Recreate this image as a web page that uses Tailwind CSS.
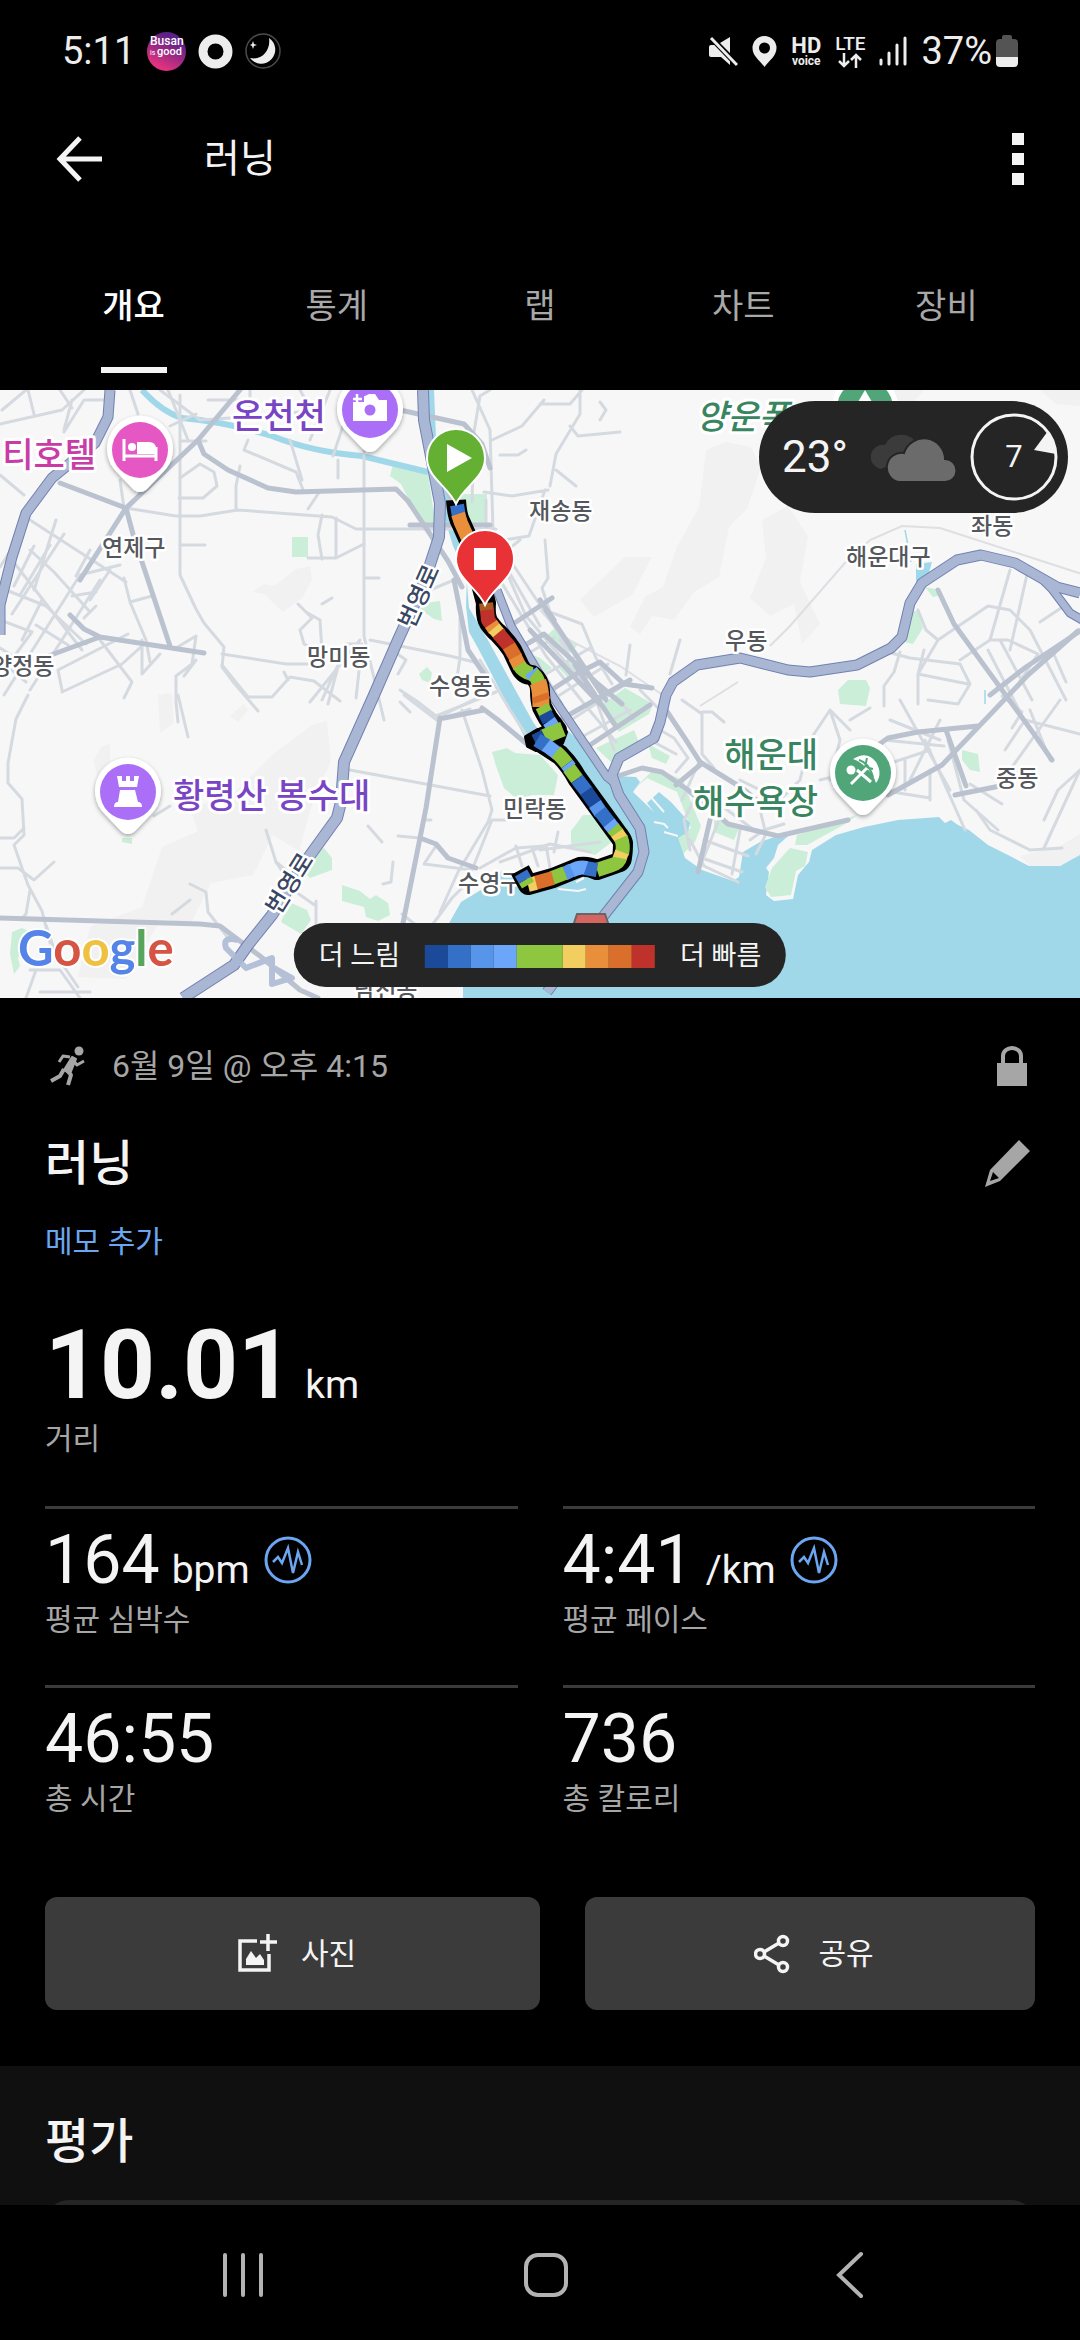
<!DOCTYPE html>
<html lang="ko">
  <head>
    <meta charset="UTF-8" />
    <meta name="viewport" content="width=device-width, initial-scale=1.0" />
    <title>러닝</title>
    <script src="https://cdn.jsdelivr.net/npm/@tailwindcss/browser@4"></script>
  </head>

  <body class="bg-black">
    <div class="flex h-screen flex-col overflow-hidden bg-black font-['Roboto','Noto_Sans_CJK_KR',sans-serif] text-[#f4f4f4]">

      <!-- Status bar -->
      <div class="flex h-[102px] shrink-0 items-center justify-between pr-[62px] pl-[62px] text-[#ededed]">
        <div class="flex items-center gap-3">
          <span class="text-[38px] leading-[44px]">5:11</span>
          <svg class="size-[39px]" viewBox="0 0 39 39">
            <defs>
              <linearGradient id="busan" x1="0.2" y1="1" x2="0.7" y2="0">
                <stop offset="0.15" stop-color="#e0327f" />
                <stop offset="0.85" stop-color="#5b2187" />
              </linearGradient>
            </defs>
            <circle cx="19.500" cy="19.500" r="19.500" fill="url(#busan)" />
            <text x="3" y="13" font-size="12" font-weight="500" fill="#fff">Busan</text>
            <text x="3" y="23" font-size="7" fill="#fff">is</text>
            <text x="10" y="23" font-size="11" font-weight="500" fill="#fff">good</text>
          </svg>
          <svg class="size-[35px]" viewBox="0 0 35 35">
            <circle cx="17.500" cy="17.500" r="12.500" fill="none" stroke="#ededed" stroke-width="9" />
          </svg>
          <svg class="size-[36px]" viewBox="0 0 36 36">
            <circle cx="18" cy="18" r="17" fill="none" stroke="#4a4a4a" stroke-width="1.500" />
            <path d="M24 5A14 14 0 1 1 5 25C17 28 26 17 24 5Z" fill="#ededed" />
            <path d="M8 8l1 3 3 1-3 1-1 3-1-3-2-1 2-1z" fill="#ededed" />
          </svg>
        </div>
        <div class="flex items-center gap-[14px]">
          <svg class="h-[32px] w-[30px]" viewBox="0 0 30 32" fill="#ededed">
            <path d="M22 2v16L12 8ZM3 10h6l13 13v7l-9-8H3q-2 0-2-2v-8q0-2 2-2Z" />
            <path d="M3 3l26 27" stroke="#000" stroke-width="5" />
            <path d="M3 3l26 27" stroke="#ededed" stroke-width="3" />
          </svg>
          <svg class="h-[31px] w-[25px]" viewBox="0 0 25 31">
            <path fill="#ededed" fill-rule="evenodd" d="M12.500 0A12 12 0 0 0 .5 12c0 8 7 12 12 19 5-7 12-11 12-19a12 12 0 0 0-12-12ZM12.500 6.500a5.500 5.500 0 1 1 0 11 5.500 5.500 0 0 1 0-11Z" />
          </svg>
          <span class="flex flex-col items-center font-bold">
            <span class="text-[22px] leading-[19px]">HD</span>
            <span class="text-[12px] leading-[12px]">voice</span>
          </span>
          <span class="flex flex-col items-center">
            <span class="text-[19px] leading-[18px] font-medium">LTE</span>
            <svg class="h-[15px] w-[24px]" viewBox="0 0 24 15" fill="none" stroke="#ededed" stroke-width="2.500">
              <path d="M6 0v13M1 8l5 5 5-5M18 15V2M13 7l5-5 5 5" />
            </svg>
          </span>
          <svg class="h-[30px] w-[28px]" viewBox="0 0 28 30" stroke="#ededed" stroke-width="3" stroke-linecap="round">
            <path d="M2 24v4M10 17v11M18 9v19M26 2v26" />
          </svg>
          <span class="flex items-center gap-1">
            <span class="text-[38px] leading-[44px]">37%</span>
            <svg class="h-[32px] w-[22px]" viewBox="0 0 22 32">
              <path fill="#545454" d="M6 2q0-2 2-2h6q2 0 2 2v2h2q4 0 4 4v15H0V8q0-4 4-4h2Z" />
              <path fill="#ededed" d="M0 22h22v6q0 4-4 4H4q-4 0-4-4Z" />
            </svg>
          </span>
        </div>
      </div>

      <!-- App bar -->
      <header class="flex h-[114px] shrink-0 items-center pr-[50px] pl-[56px]">
        <button aria-label="뒤로">
          <svg class="h-[46px] w-[46px]" viewBox="0 0 46 46" fill="none" stroke="#f4f4f4" stroke-width="5">
            <path d="M24 2L4 23l20 21M3 23h43" />
          </svg>
        </button>
        <h1 class="ml-[102px] text-[39px] leading-[56px]">러닝</h1>
        <button class="ml-auto" aria-label="더보기">
          <svg class="h-[52px] w-[24px]" viewBox="0 0 24 52" fill="#f4f4f4">
            <path d="M6 0h12v12H6zM6 20h12v12H6zM6 40h12v12H6z" />
          </svg>
        </button>
      </header>

      <!-- Tabs -->
      <nav class="grid h-[174px] shrink-0 grid-cols-5 px-8 text-[34px] text-[#a8a8a8]">
        <button class="relative pt-[6px] font-medium text-white">
          개요
          <span class="absolute bottom-[17px] left-1/2 h-[6px] w-[66px] -translate-x-1/2 bg-[#f4f4f4]"></span>
        </button>
        <button class="pt-[6px]">통계</button>
        <button class="pt-[6px]">랩</button>
        <button class="pt-[6px]">차트</button>
        <button class="pt-[6px]">장비</button>
      </nav>

      <main class="min-h-0 flex-1 overflow-hidden">
        <!-- Map -->
        <div class="relative">
          <svg class="block w-full" viewBox="0 390 1080 608" font-family="'Noto Sans CJK KR', sans-serif">
            <rect y="390" width="1080" height="608" fill="#f7f7f7" />

            <!-- hills -->
            <g fill="#f1f1f1">
              <path d="M252 592l12-8 10 2 22-17 14-3 2 14-10 18-19 14-19-18Z" />
              <path d="M706 450l20-8 25 5 10 20-14 42-18 18-10 50-25 15-20 28-22-4-12 18-10-7 15-30 18-10 14-40 22-40Z" />
              <path d="M762 520l26-14 20 30-8 46 20 42-18 20-8-40-24 12-20-18 16-40Z" />
              <path d="M580 600l45-43h27l-20 38-38 22Z" />
              <path d="M272 755l40-30 15-4 4 40-18 40-14 50-26-16-20 40-42 8-20 40-30-4-35 60-48-2 12-50 52-20 20-60 36-16-8-22 44-16Z" />
              <path d="M94 760l8-14 8-2v28l-12 10ZM158 695l14-2 2 30-14 10ZM230 716l14-12 4 6-10 12Z" />
              <path d="M1020 856l40-10 20-12v24l-22 8h-28ZM864 390h60l-12 14ZM1040 390h40v16l-24-2Z" />
            </g>

            <!-- parks -->
            <g fill="#cbeed8">
              <path d="M393 464l35 9 8 55-13 0-22-44-11-8Z" />
              <path d="M462 494h25v33l-18 0-16-20ZM292 537h16v20h-16ZM426 603l14-2 2 20-8-2-14-10ZM419 674l8-7 5 6-2 10-8-3Z" />
              <path d="M492 752l15-4 8 5 25 2 18 20-4 20-22 0-14 5-14-12-8-22ZM571 831l12-16 16 0 14 26-18 14-24-8Z" />
              <path d="M545 637l9-8 24 15-7 9ZM557 666l12-8 9 9-9 12ZM526 652l14 6 12 10-12 8ZM603 704l22-16 28 16-4 10-30 18ZM596 748l38-18 5 12-28 20Z" />
              <path d="M633 790l22-22 28 12 8 22 10 24-6 16-14 14-4-20 14-8-14-36-30-14Z" />
              <path d="M648 744l22 12-4 8-14-6ZM714 820l26 6-6 14-20-8ZM797 835l60-20-10 8-40 22-12 0Z" />
              <path d="M918 610l5 18-10 16-9-2 8-30ZM925 587l10 2 6 6-8 2ZM838 690l10-10 18 0 4 8-4 18-26-2ZM962 750l16 4 2 18-10-2-8-10Z" />
              <path d="M312 854l12-6 8 10 0 12-22 8-6-6ZM342 885l18 6 10 8 6-4 12 8 2 12-12 6-12-4-2-10-22-6ZM289 902l18 8 4 10-10 14-20-12ZM122 838h10v6l-10-2ZM12 932l10-4 8 4-12 26 2 8-6 8-4-20Z" />
            </g>

            <!-- sea and river -->
            <g fill="#a0d8ea">
              <path d="M424 390h10l3 70 12 38 16 60 4 50 20 34 44 80 14 20-20 0-48-92-10-18-3-26 1-30-14-30-12-40-14-80Z" />
              <path d="M537 734l30-4 20 18 27 28 22 1 4 5-7 10 21 20-7-9 12-11 12 10 19 21-2 9-10 6 7 20 17 12 31 11 6-4 4-25 17-10 35-12-17 15-4 13-8 10 3 4-3 23 8 6 19-2 5-24 11-13 3-12 24-15 28-8 34-7 41-3 6 6 6-3 7 5 11 5 19 15 20 10 21 11h31l20-11v143H463v-73h-15l13-23 28-17 10-14 41 10 60-16 25-18-10-20-55-80Z" />
              <path d="M916 564l16-2-4 14-12 6Z" />
            </g>
            <path d="M772 868l18-20 18 4-3 14-9 5-5 24-20 2-6-10Z" fill="#cbeed8" />
            <g fill="none" stroke="#a0d8ea">
              <path d="M142 390q20 22 40 28 45 4 90 18 40 16 90 20l66 16" stroke-width="6" />
              <path d="M905 530l6 32M985 690l0 14" stroke-width="1.500" />
            </g>
            <path d="M650 796l14 16M654 822l10 2 4 4M664 832l14 4M558 889l20 2 8-2M576 882l8-4" fill="none" stroke="#f7f7f7" stroke-width="2" />

            <!-- railway -->
            <path d="M540 610l25 28 55 28 50 34M700 706l38-24M770 646l20-20 54-62 26-24 32-14 38 2 142 46" fill="none" stroke="#dddfe3" stroke-width="2" />

            <!-- small roads -->
            <g fill="none" stroke="#d5dae0" stroke-width="3" stroke-linejoin="round" stroke-linecap="round">
              <path d="M0 424l62-14 22-20M28 390l6 24M60 390l12 18M130 390l8 24M168 390l20 50M0 475l24 20M72 400l-8 30M84 400l-20 32M110 400h-24" />
              <path d="M180 395v180l16 34 8 14 20 24-2 20 12 16 24 28M126 508l50 8h24l38-6 94 7 24 12 140 0M120 480l4 28M140 496l-20 20M182 441h24" />
              <path d="M200 420l60-4 60-6M160 390l40 30M208 400h44M250 390v24M300 390l20 36M330 390l-20 50M345 420l-12 36M170 426l26-12" />
              <path d="M236 510l0-24 4-20M248 440l-4 10 52 22 8 20M290 440l12 40M338 460v18M364 440v196l20 84M308 492l12-1-12 18" />
              <path d="M180 478l20-14 14 8 3 14-14 12h-24M322 515l-4 20 4 24M336 518v38M308 558l28 0 28-14M180 545h25M365 578h14" />
              <path d="M30 520l96 62M14 545l-14 22M6 590l40 16 40 38M30 550l24 22 36 40M12 560l70 90M34 546l-20 40M50 545l-30 50M56 520l-22 70M64 534l-52 80M90 550l-14 26M110 570l-20 30" />
              <path d="M80 575l40-10M0 620l32 12-22 30M22 640l20-40M30 690l70-110M4 695l76-120M0 648l30 18M0 660l26 22M36 625l32 20M124 578l6 24 16 38 4 22M130 602l22-6M72 596l24-4M96 606l-12 12" />
              <path d="M62 690l-4-20 70-36M62 692l60-28 20-18M100 640l32 42-8 16M142 640v34l18-20M176 648l20-12-4 28-16 12v26l2 20M196 660l-12 16" />
              <path d="M222 654l64 10h28M222 665l26 32 24 0 18-20 24 4 26 20M288 680l-4-8M298 604l14 14-12 12 4 14 18 8-2-32-14-8ZM322 604l10-6M346 644h16l-6 54M322 700l20-44M360 640l-50 62M328 704l14-52" />
              <path d="M370 640l80 16 24 6M460 618v40l-4 26M430 590l24-10M392 650l14 10-8 14M400 690l18 12 18 14 60-24M410 712l-10-10" />
              <path d="M490 390l-10 6-6 36-2 70M472 390l18 40 3 100M492 440l30-14 22-26M540 404l30 0 12-14M580 390l0 24-24 40-6 32M570 426l8 10 42-4M600 402l6 8-6 10M556 470l20 16M500 455h18l8-5M548 490l-36 6-28-4M545 490l-16 46-50 8M520 540l-20 16 40 70M486 500v26l40 90 60 70M545 540l3 38-6 10 8 24 32 12 14 34 16 26" />
              <path d="M510 560l60 90M500 580l46 76 40 50 30 36M480 660l30 50 26 40M536 660l26 44M560 640l36 60 18 50M524 656l30-18M536 680l54-32M552 700l56-36M568 722l58-38M580 738l50-28M630 645l-4 30M680 640l-10 34M620 700l14 20M640 690l20 20" />
              <path d="M682 700l20 14v40l12 14M702 712l10 0 12 10M660 730l14 8 14 20-12 14M700 760l-18 40M650 740l26 14M694 800l-10 20 6 30M740 830l-8 44M722 812l-24 60M702 858l40 14M704 840l44 16M750 840l14-10 20-6M690 840l14 26 34 16" />
              <path d="M714 800l40 30M760 810l6 24-10 20M740 780l40 20 20-20 10-40 20-30 20 20M830 710l10 30-10 40M820 780l40-10M850 720l20-12" />
              <path d="M918 610l8 20 12 10 50-34 22 4 20 20 36 70M938 640l-20 34v30M880 650l30 8 50 6 10 20-12 20-30-4M900 652l-6 20-10 14v20M924 650l-6 24 50 10M960 660l30-20 18 0 30 14-20 30M1010 570l-20 70M1028 570l-18 80M988 650l30 58M1000 640l32 60" />
              <path d="M1040 622l24-16M1052 650l14 32M1038 660l22-12M890 720l50 20M884 740l60 6M900 700l50 90M870 770l60-20M925 740l40 90M940 720l-30 60M948 740l16 60 34 30M905 760v30M930 770v30M880 790l50 8" />
              <path d="M970 784l32 20M1005 750l20-30 55 14M1030 710l20 50M1060 700l-50 70M1044 820l14-30 22-20M1062 848l-32 2-40-20-14-20M1080 770l-36 78M1002 696l20 16-10 16" />
              <path d="M26 390l-24 20M178 695l10 42M28 695l-12 24-8 44 0 20 14 16 2 36-10 10 14 40 14 26 8 32M0 838h14l10-10M0 868h18l16 12 20-18M30 890l-4 24-4 4M46 925l10 30 22 32M30 970l30 0 20 28M26 998l10-28M40 992h50M266 830l10 32 10 8M154 816l16-10" />
              <path d="M404 695l34 26 32-12M437 718l40-20M462 710l20 60 10 40-4 12-30 50-18 40M350 770l140 26M492 820l14 0M492 820l-20 50-48-6 12-18M480 868l36-20 28-2M398 836l22 2M368 826l14 16M393 862l-2 20-8 2M402 914l30 24M430 928l22-30 20-20M425 820h6M316 901v24M190 884l16 8 2 20 20 26M172 914l18-14M276 862l20 30 20 14" />
              <path d="M500 862l50-18 40 8M546 845l6 34M558 832l-4 20M540 850l60-8M516 846l6 20M532 848l6 18" />
            </g>

            <!-- main roads -->
            <g fill="none" stroke="#bbc2cf" stroke-width="5" stroke-linejoin="round" stroke-linecap="round">
              <path d="M240 390l-42 50 6 14 24 16 40 18 28 4 100-3 12 12 40 60 14 26" />
              <path d="M198 440l-72 68-46 72M60 483l66 25 8 30 36 108M70 615l14 14 16 8 104 16M100 637l-60 22" />
              <path d="M400 410l64 14 18 20 8 24M490 525h-80M439 440l8 50 28 60 10 30M454 580l14 70 20 30" />
              <path d="M440 718l-14 90-26 130M484 710l-40 8M482 708l16 12 30 25M420 838l16 6 12 14 28 10M540 600l14 20M510 626l42-28" />
              <path d="M520 648l24-14 54 50 24 20M530 630l70 74M536 700l40-26 24-12 24 22 28 4M560 720l70-40M590 745l60-40M575 665l40 60M546 610l60 90" />
              <path d="M666 710l20 30 14 22 42 26 24 20M612 778l30-10 20 4 26 18 40 34 50 12 70-16M700 765l-24 20M710 820l-12 52M860 758l28-20 30-6 60-6M888 795l54-30 86-90 50-44M938 590l16 34 80 110 18 26" />
              <path d="M946 730l20 56M955 795l50-10M990 695l36-28 54-36" />
              <path d="M0 918l200 6 20 2 40 30 40 34 18 8" />
            </g>

            <!-- expressways: dark casing, then fill -->
            <g fill="none" stroke-linejoin="round">
              <g stroke="#7182b0">
                <path d="M110 390l-2 27-13 26-43 35-26 35-14 44-12 48v30" stroke-width="11" />
                <path d="M423 390l1 30 16 83-1 34-15 46-26 57-24 55-30 67-3 40-4 16-34 47-31 50-24 30-14 20-51 33" stroke-width="12" />
                <path d="M1080 593l-23-6-42-24-34-8-24 5-35 23-12 20-8 34-11 11-34 17-47 7-22-2-48-12-43 7-24 17-7 13-6 27-6 16-35 20-7 17 7 20 21 33 4 24-6 20-36 46-55 74" stroke-width="11" />
                <path d="M497 590l14 36 42 71 54 80 10 8M1040 577l12 12 18 24 14 8" stroke-width="9" />
                <path d="M238 940q-16-4-12 8l20 20 26-10 0 26 20-6-18-10" stroke-width="6" stroke="#b4bfd8" />
              </g>
              <g stroke="#a9b6d4">
                <path d="M110 390l-2 27-13 26-43 35-26 35-14 44-12 48v30" stroke-width="9" />
                <path d="M423 390l1 30 16 83-1 34-15 46-26 57-24 55-30 67-3 40-4 16-34 47-31 50-24 30-14 20-51 33" stroke-width="10" />
                <path d="M1080 593l-23-6-42-24-34-8-24 5-35 23-12 20-8 34-11 11-34 17-47 7-22-2-48-12-43 7-24 17-7 13-6 27-6 16-35 20-7 17 7 20 21 33 4 24-6 20-36 46-55 74" stroke-width="9" />
                <path d="M497 590l14 36 42 71 54 80 10 8M1040 577l12 12 18 24 14 8" stroke-width="7" />
              </g>
            </g>
            <path d="M577 914h28l4 12h-36Z" fill="#d56561" stroke="#6b6466" stroke-width="2" />

            <!-- place names -->
            <g font-size="23" font-weight="500" fill="#54575c" stroke="#fff" stroke-width="5" stroke-linejoin="round" paint-order="stroke">
              <text x="102" y="556">연제구</text>
              <text x="-9" y="674">양정동</text>
              <text x="307" y="665">망미동</text>
              <text x="429" y="694">수영동</text>
              <text x="529" y="519">재송동</text>
              <text x="846" y="565">해운대구</text>
              <text x="971" y="534">좌동</text>
              <text x="725" y="649">우동</text>
              <text x="503" y="817">민락동</text>
              <text x="996" y="786">중동</text>
              <text x="458" y="891">수영구</text>
              <text x="354" y="998">남천동</text>
            </g>
            <g font-size="24" font-weight="500" fill="#3a4763" stroke="#fff" stroke-width="5" stroke-linejoin="round" paint-order="stroke">
              <text transform="translate(413 630) rotate(-66)">번영로</text>
              <text transform="translate(279 916) rotate(-58)">번영로</text>
            </g>
            <g font-size="34" font-weight="500" stroke="#fff" stroke-width="6" stroke-linejoin="round" paint-order="stroke">
              <text x="96" y="467" text-anchor="end" fill="#c93ba5">티호텔</text>
              <text x="232" y="428" fill="#7a45c4">온천천</text>
              <text x="173" y="808" fill="#7a45c4">황령산 봉수대</text>
              <text x="696" y="429" font-style="italic" fill="#39855f">양운폭</text>
              <text x="818" y="767" text-anchor="end" fill="#39855f">해운대</text>
              <text x="818" y="814" text-anchor="end" fill="#39855f">해수욕장</text>
            </g>

            <!-- route: black outline under the pace colours -->
            <g fill="none" stroke-linejoin="round" stroke-linecap="butt">
              <path d="M456 500q1 16 5 23l9 20 16 60q-1 14 3 20 6 8 9 10 8 8 14 17l8 17q4 8 12 8 8 6 8 15 0 10 2 17 3 6 6 11l9 12-20 10 23 15q10 10 17 23l40 55q5 6 6 10 0 9-1 14 0 5-5 6l-20 7q-9-4-17-3l-27 11-25 7-8-15" stroke="#000" stroke-width="20" />
              <path d="M526 737l12-7 14-1-2-13 16 16-4 11-18 3-8 4-8-4Z" fill="#000" stroke="#000" stroke-width="4" />
              <g stroke-width="14">
                <path d="M457 505l2 12" stroke="#3570c8" />
                <path d="M458 514l3 9 9 20" stroke="#e98f3c" />
                <path d="M486 603l1 8" stroke="#a95a22" />
                <path d="M487 610l1 10 6 8" stroke="#bf322b" />
                <path d="M491 624l4 6" stroke="#e98f3c" />
                <path d="M494 628l6 7" stroke="#f2cd60" />
                <path d="M498 633l12 14" stroke="#bf322b" />
                <path d="M509 646l7 12" stroke="#da6f2c" />
                <path d="M515 657l5 10" stroke="#e98f3c" />
                <path d="M519 665q4 7 13 9" stroke="#8fc63f" />
                <path d="M531 671l4 6" stroke="#6ba6f8" />
                <path d="M533 674q5 4 6 11" stroke="#8fc63f" />
                <path d="M538 682q3 8 3 25" stroke="#e98f3c" stroke-width="17" />
                <path d="M540 695l2 6" stroke="#da6f2c" stroke-width="17" />
                <path d="M542 706l4 8" stroke="#8fc63f" />
                <path d="M545 713l4 8" stroke="#1c4a9b" />
                <path d="M549 721l4 6" stroke="#6ba6f8" />
                <path d="M563 729l-20 8" stroke="#8fc63f" stroke-width="15" />
                <path d="M544 735l-10 5" stroke="#1c4a9b" stroke-width="11" />
                <path d="M537 740l10 6" stroke="#3570c8" />
                <path d="M546 745l12 9" stroke="#6ba6f8" />
                <path d="M556 752q5 4 11 12" stroke="#8fc63f" />
                <path d="M567 764l3 4" stroke="#6ba6f8" />
                <path d="M569 768l8 11" stroke="#8fc63f" />
                <path d="M577 779l10 13" stroke="#3570c8" />
                <path d="M586 791l10 14" stroke="#1c4a9b" />
                <path d="M595 804l6 9" stroke="#5795eb" />
                <path d="M600 811l10 13" stroke="#3570c8" />
                <path d="M609 823l5 6" stroke="#6ba6f8" />
                <path d="M613 828l5 6" stroke="#8fc63f" />
                <path d="M617 833l5 7" stroke="#f2cd60" />
                <path d="M621 838q3 7 1 16" stroke="#8fc63f" />
                <path d="M622 852l-3 8" stroke="#f2cd60" />
                <path d="M620 858q-1 5-8 7l-15 5" stroke="#8fc63f" />
                <path d="M597 870l-12-2" stroke="#3570c8" />
                <path d="M586 868q-6-2-15 3" stroke="#6ba6f8" />
                <path d="M572 870l-8 4" stroke="#5795eb" />
                <path d="M565 873l-13 5" stroke="#8fc63f" />
                <path d="M553 878l-18 5" stroke="#da6f2c" />
                <path d="M536 883l-8 2" stroke="#f2cd60" />
                <path d="M528 885l-3-5" stroke="#8fc63f" />
                <path d="M525 880l-4-7" stroke="#3570c8" />
              </g>
            </g>

            <!-- place pins -->
            <defs>
              <path id="pin" d="M0 42q-5 0-9-5l-17-18A33 33 0 1 1 26 19L9 37q-4 5-9 5Z" fill="#fff" />
              <path id="marker" d="M0 46C-8 28-29 20-29 0A29 29 0 0 1 29 0C29 20 8 28 0 46Z" stroke="#fff" stroke-width="2" />
              <filter id="shadow" x="-30%" y="-30%" width="160%" height="170%">
                <feDropShadow dx="0" dy="2" stdDeviation="2" flood-opacity="0.350" />
              </filter>
            </defs>
            <g transform="translate(140 450)">
              <use href="#pin" filter="url(#shadow)" />
              <circle r="28" fill="#e557c3" />
              <path d="M-16-11v22M16-3v14M-16 6h32" stroke="#fff" stroke-width="3" />
              <path d="M-3 4v-12h12q7 0 7 7v5Z" fill="#fff" />
              <circle cx="-8" cy="-3" r="4" fill="#fff" />
            </g>
            <g transform="translate(370 410)">
              <use href="#pin" filter="url(#shadow)" />
              <circle r="28" fill="#ab6ef7" />
              <path d="M-17 11v-19h4v-6h8l4-2h6l4 6h8v21Z" fill="#fff" />
              <path d="M-18-17h12v9h-12z" fill="#ab6ef7" />
              <circle r="5.500" fill="#ab6ef7" />
              <path d="M-13-16v9M-17-11h9" stroke="#fff" stroke-width="2.500" />
            </g>
            <g transform="translate(128 792)">
              <use href="#pin" filter="url(#shadow)" />
              <circle r="28" fill="#ab6ef7" />
              <path d="M-11-16h5v5h4v-5h4v5h4v-5h5L9-5H-9ZM-8-2H7l3 12q4 0 4 5h-28q0-5 4-5Z" fill="#fff" />
            </g>
            <g transform="translate(863 773)">
              <use href="#pin" filter="url(#shadow)" />
              <circle r="28" fill="#50a679" />
              <circle cx="-12" cy="-3" r="4.500" fill="#fff" />
              <path d="M-10-14Q4-23 13-11q7 12 0 21-3-10-10-15-6-7-13-9Z" fill="#fff" />
              <path d="M-4-13Q6-10 10 4M4-15l-2 9 8 2" fill="none" stroke="#50a679" stroke-width="2" />
              <path d="M4-5l-16 16M-6-3L8 9" stroke="#fff" stroke-width="3" />
            </g>
            <g transform="translate(865 408)">
              <use href="#pin" />
              <circle r="28" fill="#50a679" />
              <path d="M0-18l14 24h-28Z" fill="#fff" />
            </g>

            <!-- start and finish -->
            <g transform="translate(456 458)">
              <use href="#marker" fill="#64b032" />
              <path d="M-9-14L16 0-9 14Z" fill="#fff" />
            </g>
            <g transform="translate(485 559)">
              <use href="#marker" fill="#e93236" />
              <path d="M-11-11h22v22h-22z" fill="#fff" />
            </g>

            <text x="18" y="966" font-family="Lato, sans-serif" font-size="49" font-weight="700" stroke="#fff" stroke-width="4" stroke-linejoin="round" paint-order="stroke"><tspan fill="#5484e8">G</tspan><tspan fill="#d55443">o</tspan><tspan fill="#efc143">o</tspan><tspan fill="#5484e8">g</tspan><tspan fill="#58a55d">l</tspan><tspan fill="#d55443">e</tspan></text>
          </svg>

          <!-- Weather -->
          <div class="absolute top-[11px] right-3 flex h-[112px] items-center rounded-full bg-[#252525] pr-[10px] pl-[23px]">
            <span class="text-[44px] leading-[52px]">23°</span>
            <svg class="mr-[12px] ml-5 h-[50px] w-[90px]" viewBox="0 0 90 50">
              <path d="M13 37a12 12 0 0 1 4-24A18 18 0 0 1 49 12L34 28Z" fill="#3b3b3b" />
              <path d="M31 50a14 14 0 0 1 5-29A21 21 0 0 1 77 27a11 11 0 0 1 0 23Z" fill="#6b6b6b" stroke="#252525" stroke-width="2" />
            </svg>
            <span class="relative flex size-[88px] items-center justify-center text-[31px]">
              <svg class="absolute inset-0 size-[88px]" viewBox="0 0 88 88">
                <circle cx="44" cy="44" r="42" fill="none" stroke="#f4f4f4" stroke-width="3" />
                <path d="M64 37L78 18q8 10 8 23Z" fill="#f4f4f4" />
              </svg>
              7
            </span>
          </div>

          <!-- Pace legend -->
          <div class="absolute bottom-[11px] left-1/2 flex h-[64px] -translate-x-1/2 items-center gap-[25px] rounded-full bg-[#252525] px-[25px] pt-[2px] text-[27px] leading-[40px] whitespace-nowrap">
            <span>더 느림</span>
            <span class="flex h-[23px]">
              <span class="w-[23px] bg-[#1c4a9b]"></span>
              <span class="w-[23px] bg-[#3570c8]"></span>
              <span class="w-[23px] bg-[#5795eb]"></span>
              <span class="w-[23px] bg-[#6ba6f8]"></span>
              <span class="w-[46px] bg-[#8fc63f]"></span>
              <span class="w-[23px] bg-[#f2cd60]"></span>
              <span class="w-[23px] bg-[#e98f3c]"></span>
              <span class="w-[23px] bg-[#da6f2c]"></span>
              <span class="w-[23px] bg-[#bf322b]"></span>
            </span>
            <span>더 빠름</span>
          </div>
        </div>

        <!-- Activity summary -->
        <section class="px-[45px] pt-[38px]">
          <div class="flex h-[60px] items-center text-[32px] text-[#a6a6a6]">
            <svg class="mr-[24px] ml-[5px] h-[40px] w-[38px]" viewBox="0 0 38 40" fill="none" stroke="#a6a6a6" stroke-linejoin="round">
              <circle cx="29" cy="5" r="4.500" fill="#a6a6a6" stroke="none" />
              <path d="M22 11l-8 13 6 4 6-15Z" fill="#a6a6a6" stroke-width="2" />
              <path d="M20 11l-7-1-4 6M23 14l4 5 7-4" stroke-width="3" />
              <path d="M15 22l6 7-3 10M14 23l-4 7-9 5" stroke-width="4" />
            </svg>
            <span>6월 9일 @ 오후 4:15</span>
            <svg class="mr-2 ml-auto h-[40px] w-[30px]" viewBox="0 0 30 40">
              <path d="M0 17h30v23H0z" fill="#a6a6a6" />
              <path d="M6 19v-9a9 8 0 0 1 18 0v9" fill="none" stroke="#a6a6a6" stroke-width="4" />
            </svg>
          </div>

          <div class="mt-[18px] flex h-[100px] items-center justify-between">
            <h2 class="text-[48px] leading-[60px] font-medium">러닝</h2>
            <button class="mr-1" aria-label="제목 수정">
              <svg class="size-[48px]" viewBox="0 0 48 48" fill="#a6a6a6">
                <path fill-rule="evenodd" d="M36 0l11 11-30 30-15 6 5-17ZM10 32l-3 9 9-3Z" />
              </svg>
            </button>
          </div>
          <a href="#" class="mt-1 block text-[30px] leading-[48px] text-[#6ba6f0]">메모 추가</a>

          <p class="mt-[51px] flex h-[96px] items-baseline gap-3">
            <span class="text-[96px] leading-[96px] font-bold">10.01</span>
            <span class="text-[39px] leading-[48px]">km</span>
          </p>
          <p class="mt-1 text-[30px] leading-[44px] text-[#a6a6a6]">거리</p>

          <dl class="mt-[45px] grid grid-cols-2 gap-x-[45px] gap-y-[43px]">
            <div class="flex flex-col-reverse gap-1 border-t-3 border-[#3b3b3b] pt-[17px]">
              <dt class="text-[30px] leading-[44px] text-[#a6a6a6]">평균 심박수</dt>
              <dd class="flex h-[68px] items-center">
                <span class="text-[68px] leading-[68px]">164</span>
                <span class="mt-[20px] ml-3 text-[39px] leading-[48px]">bpm</span>
                <svg class="ml-[14px] size-[48px]" viewBox="0 0 48 48" fill="none" stroke="#6ba6f0">
                  <circle cx="24" cy="24" r="22" stroke-width="3" />
                  <path d="M9 26l5-5 4 6 6-15 5 25 5-21 4 13" stroke-width="2.500" />
                </svg>
              </dd>
            </div>
            <div class="flex flex-col-reverse gap-1 border-t-3 border-[#3b3b3b] pt-[17px]">
              <dt class="text-[30px] leading-[44px] text-[#a6a6a6]">평균 페이스</dt>
              <dd class="flex h-[68px] items-center">
                <span class="text-[68px] leading-[68px]">4:41</span>
                <span class="mt-[20px] ml-3 text-[39px] leading-[48px]">/km</span>
                <svg class="ml-[14px] size-[48px]" viewBox="0 0 48 48" fill="none" stroke="#6ba6f0">
                  <circle cx="24" cy="24" r="22" stroke-width="3" />
                  <path d="M9 26l5-5 4 6 6-15 5 25 5-21 4 13" stroke-width="2.500" />
                </svg>
              </dd>
            </div>
            <div class="flex flex-col-reverse gap-1 border-t-3 border-[#3b3b3b] pt-[17px]">
              <dt class="text-[30px] leading-[44px] text-[#a6a6a6]">총 시간</dt>
              <dd class="text-[68px] leading-[68px]">46:55</dd>
            </div>
            <div class="flex flex-col-reverse gap-1 border-t-3 border-[#3b3b3b] pt-[17px]">
              <dt class="text-[30px] leading-[44px] text-[#a6a6a6]">총 칼로리</dt>
              <dd class="text-[68px] leading-[68px]">736</dd>
            </div>
          </dl>

          <div class="mt-[76px] grid grid-cols-[11fr_10fr] gap-[45px] text-[30px]">
            <button class="flex h-[113px] items-center justify-center gap-[24px] rounded-xl bg-[#3b3b3b] pl-2">
              <svg class="size-[40px]" viewBox="0 0 40 40" fill="none" stroke="#f4f4f4" stroke-width="3.500">
                <path d="M20 7H3v29h29V20M31 0v17M23 8h17" />
                <path d="M9 31V25l5-8 5 7 4-4 4 6v5Z" fill="#f4f4f4" stroke="none" />
              </svg>
              사진
            </button>
            <button class="flex h-[113px] items-center justify-center gap-[28px] rounded-xl bg-[#3b3b3b] pl-2">
              <svg class="h-[40px] w-[36px]" viewBox="0 0 36 40" fill="none" stroke="#f4f4f4" stroke-width="3.500">
                <circle cx="29" cy="7" r="4.500" />
                <circle cx="6" cy="20" r="4.500" />
                <circle cx="29" cy="33" r="4.500" />
                <path d="M10 18l15-9M10 22l15 9" />
              </svg>
              공유
            </button>
          </div>
        </section>

        <!-- Evaluation -->
        <section class="mt-[56px] bg-[#101010] px-[45px] pt-[46px]">
          <h2 class="text-[48px] leading-[60px] font-medium">평가</h2>
          <div class="mt-7 h-[200px] rounded-3xl bg-[#252525]"></div>
        </section>
      </main>

      <!-- System navigation -->
      <nav class="flex h-[135px] shrink-0 items-center justify-between bg-black pt-1 pr-[207px] pl-[219px]">
        <button aria-label="최근 앱">
          <svg class="size-[48px]" viewBox="0 0 48 48" stroke="#b3b3b3" stroke-width="4" stroke-linecap="round">
            <path d="M6 4v40M24 4v40M42 4v40" />
          </svg>
        </button>
        <button aria-label="홈">
          <svg class="size-[48px]" viewBox="0 0 48 48" fill="none" stroke="#b3b3b3" stroke-width="4">
            <rect x="4" y="4" width="40" height="40" rx="12" />
          </svg>
        </button>
        <button aria-label="뒤로 가기">
          <svg class="size-[48px]" viewBox="0 0 48 48" fill="none" stroke="#b3b3b3" stroke-width="4" stroke-linecap="round">
            <path d="M36 3L14 24l22 21" />
          </svg>
        </button>
      </nav>
    </div>
  </body>
</html>
